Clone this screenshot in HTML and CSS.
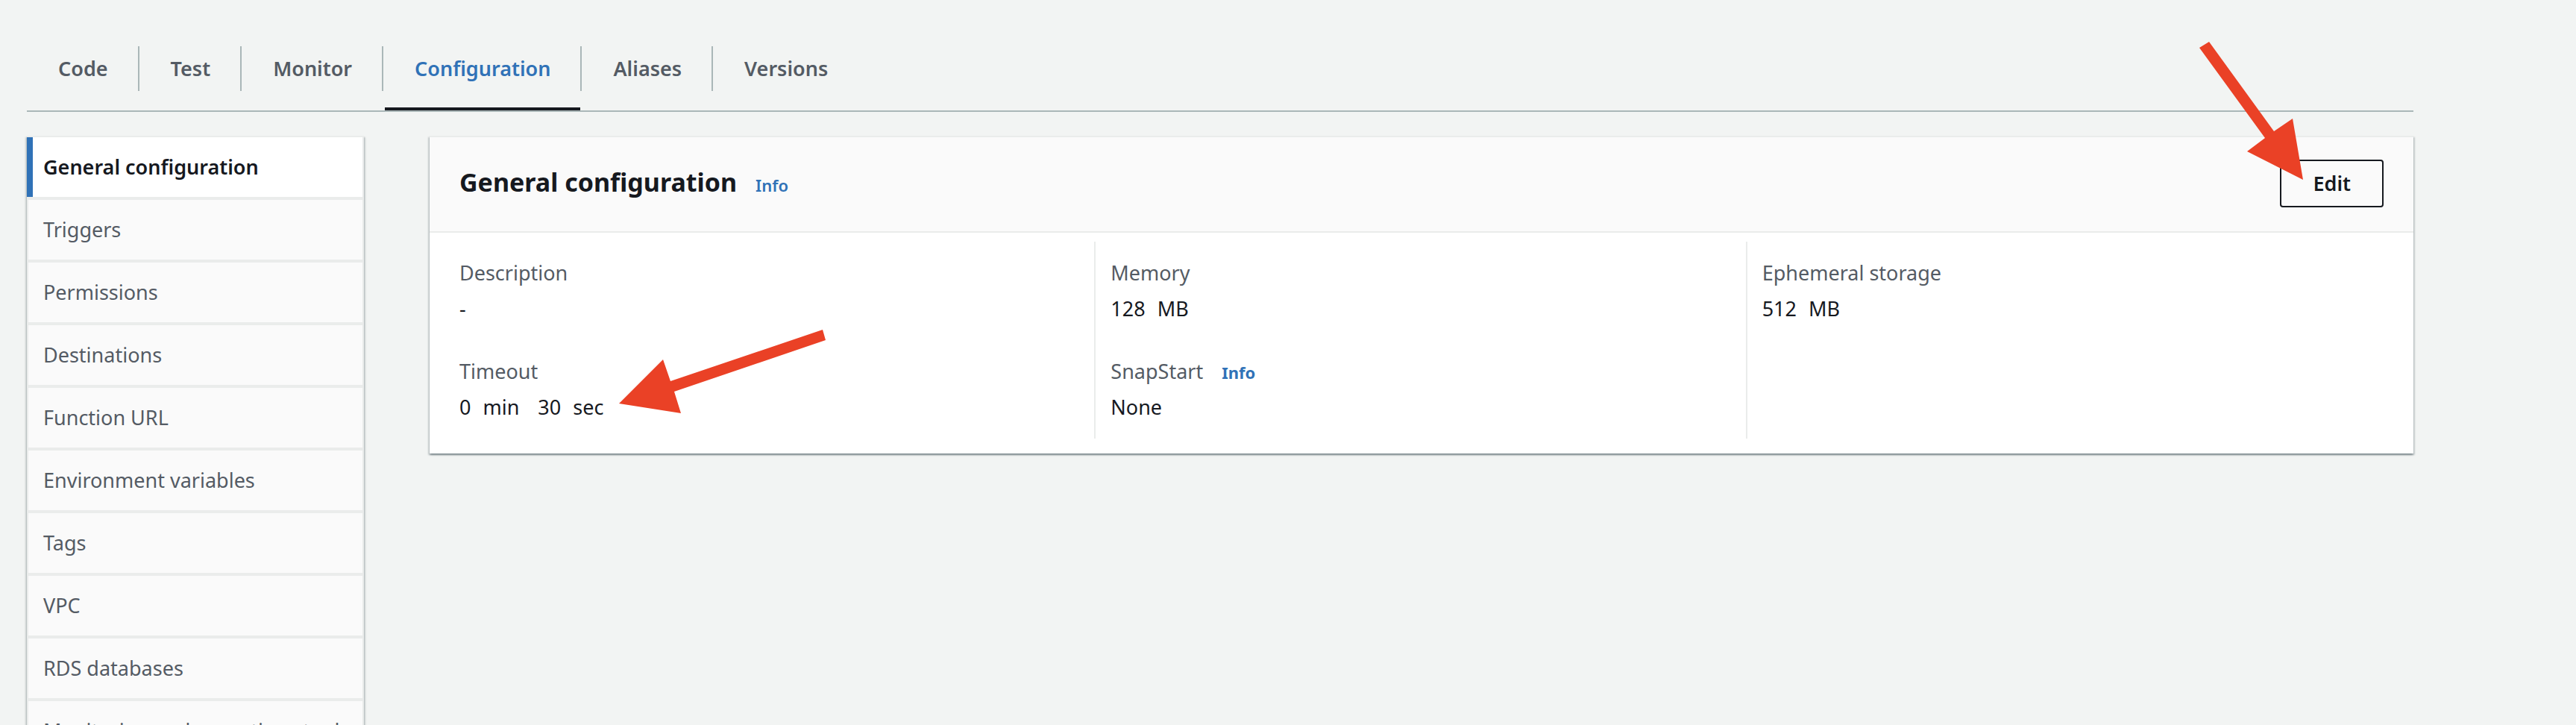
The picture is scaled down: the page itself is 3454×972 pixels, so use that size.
FILE: index.html
```html
<!DOCTYPE html>
<html lang="en">
<head>
<meta charset="utf-8">
<title>Function configuration</title>
<link rel="stylesheet" href="styles.css">
</head>
<body>
<div class="page">
  <nav class="tabs" aria-label="Function sections">
    <ul class="tabs-list">
      <li class="tab"><a class="tab-link" href="#code">Code</a></li>
      <li class="tab"><a class="tab-link" href="#test">Test</a></li>
      <li class="tab"><a class="tab-link" href="#monitor">Monitor</a></li>
      <li class="tab"><a class="tab-link tab-link-active" href="#configuration" aria-current="page">Configuration</a></li>
      <li class="tab"><a class="tab-link" href="#aliases">Aliases</a></li>
      <li class="tab"><a class="tab-link" href="#versions">Versions</a></li>
    </ul>
  </nav>

  <div class="content">
    <nav class="side" aria-label="Configuration sections">
      <a class="side-link side-link-active" href="#general" aria-current="true">General configuration</a>
      <a class="side-link" href="#triggers">Triggers</a>
      <a class="side-link" href="#permissions">Permissions</a>
      <a class="side-link" href="#destinations">Destinations</a>
      <a class="side-link" href="#url">Function URL</a>
      <a class="side-link" href="#environment">Environment variables</a>
      <a class="side-link" href="#tags">Tags</a>
      <a class="side-link" href="#vpc">VPC</a>
      <a class="side-link" href="#rds">RDS databases</a>
      <a class="side-link" href="#tools">Monitoring and operations tools</a>
    </nav>

    <main class="card">
      <header class="card-header">
        <div class="card-heading">
          <h1 class="card-title">General configuration</h1>
          <a class="info" href="#info">Info</a>
        </div>
        <div class="card-action">
          <button class="button" type="button">Edit</button>
          <svg class="arrow arrow-edit" width="142" height="190" viewBox="0 0 142 190" aria-hidden="true">
            <polygon points="1,10 14,2 101,122 126,105 140,187 65,149 89,131"/>
          </svg>
        </div>
      </header>

      <div class="card-body">
        <dl class="column">
          <div class="field">
            <dt class="label">Description</dt>
            <dd class="value">-</dd>
          </div>
          <div class="field">
            <dt class="label">Timeout</dt>
            <dd class="value value-marked">
              <span class="amount"><span>0</span> <span>min</span></span>
              <span class="amount"><span>30</span> <span>sec</span></span>
              <svg class="arrow arrow-timeout" width="280" height="114" viewBox="0 0 280 114" aria-hidden="true">
                <polygon points="273,0 277,14 74,83 83,112 0,99 59,40 69,69"/>
              </svg>
            </dd>
          </div>
        </dl>
        <dl class="column">
          <div class="field">
            <dt class="label">Memory</dt>
            <dd class="value"><span class="amount"><span>128</span> <span>MB</span></span></dd>
          </div>
          <div class="field">
            <dt class="label">SnapStart <a class="info info-strong" href="#snapstart">Info</a></dt>
            <dd class="value">None</dd>
          </div>
        </dl>
        <dl class="column">
          <div class="field">
            <dt class="label">Ephemeral storage</dt>
            <dd class="value"><span class="amount"><span>512</span> <span>MB</span></span></dd>
          </div>
        </dl>
      </div>
    </main>
  </div>
</div>
</body>
</html>
```
FILE: styles.css
```css
:root {
  --page: #f2f4f3;
  --text: #16191f;
  --muted: #545b64;
  --blue: #3072b7;
  --line: #aab7b8;
  --line-soft: #eaeceb;
  --panel: #fafafa;
  --shadow: 0 2px 2px 0 rgba(0, 28, 36, 0.3),
    2px 2px 2px 0 rgba(0, 28, 36, 0.15),
    -2px 2px 2px 0 rgba(0, 28, 36, 0.15);
}

* {
  box-sizing: border-box;
}

body {
  margin: 0;
  height: 100vh;
  overflow: hidden;
  background: var(--page);
  color: var(--text);
  font-family: "Noto Sans", "Open Sans", sans-serif;
  font-size: 27px;
  line-height: 44px;
}

a {
  text-decoration: none;
}

.page {
  padding: 62px 218px 0 36px;
}

/* Tabs */
.tabs {
  border-bottom: 2px solid var(--line);
}

.tabs-list {
  display: flex;
  gap: 2px;
  margin: 0;
  padding: 0 2px;
  list-style: none;
}

.tab {
  display: flex;
  align-items: flex-start;
}

.tab::after {
  content: "";
  width: 2px;
  height: 60px;
  background: var(--line);
}

.tab:last-child::after {
  display: none;
}

.tab-link {
  padding: 0 40px 22px;
  border-bottom: 4px solid transparent;
  color: var(--muted);
  font-weight: 650;
  line-height: 60px;
}

.tab-link-active {
  border-bottom-color: var(--text);
  color: var(--blue);
}

/* Page columns */
.content {
  display: flex;
  align-items: flex-start;
  gap: 88px;
  margin-top: 32px;
}

/* Side navigation */
.side {
  flex: 0 0 452px;
  box-shadow: var(--shadow);
}

.side-link {
  display: block;
  padding: 18px 8px 18px 20px;
  border: 2px solid var(--line-soft);
  background: var(--panel);
  color: var(--muted);
}

.side-link-active {
  padding-left: 22px;
  border-left: 0;
  background: linear-gradient(to right, var(--blue) 8px, #fff 8px);
  color: var(--text);
  font-weight: 650;
}

/* Card */
.card {
  flex: 1;
  border-top: 2px solid var(--line-soft);
  background: #fff;
  box-shadow: var(--shadow);
}

.card-header {
  display: flex;
  align-items: flex-start;
  justify-content: space-between;
  padding: 30px 40px 32px;
  border-bottom: 2px solid var(--line-soft);
  background: var(--panel);
}

.card-heading {
  display: flex;
  align-items: baseline;
  gap: 25px;
}

.card-title {
  margin: 0;
  font-size: 34px;
  font-weight: 700;
  line-height: 60px;
}

.info {
  color: var(--blue);
  font-size: 22px;
  font-weight: 600;
  line-height: 28px;
}

.info-strong {
  font-weight: 700;
}

.card-action {
  position: relative;
}

.button {
  display: block;
  padding: 8px 42px;
  border: 2px solid var(--text);
  border-radius: 4px;
  background: transparent;
  color: var(--text);
  font: inherit;
  font-weight: 650;
}

.card-body {
  display: grid;
  grid-template-columns: repeat(3, 1fr);
  padding: 12px 20px 20px;
}

.column {
  display: flex;
  flex-direction: column;
  gap: 40px;
  margin: 0;
  padding: 20px;
  border-right: 2px solid var(--line-soft);
}

.column:last-child {
  border-right: 0;
}

.field {
  display: flex;
  flex-direction: column;
  gap: 4px;
}

.label {
  display: flex;
  align-items: baseline;
  gap: 25px;
  color: var(--muted);
}

.value {
  display: flex;
  gap: 25px;
  margin: 0;
}

.amount {
  display: flex;
  gap: 16px;
}

/* Callout arrows drawn over the card */
.value-marked {
  position: relative;
}

.arrow {
  position: absolute;
  fill: #ea4126;
  pointer-events: none;
}

.arrow-edit {
  top: -160px;
  right: 106px;
}

.arrow-timeout {
  top: -82px;
  left: 214px;
}
```
